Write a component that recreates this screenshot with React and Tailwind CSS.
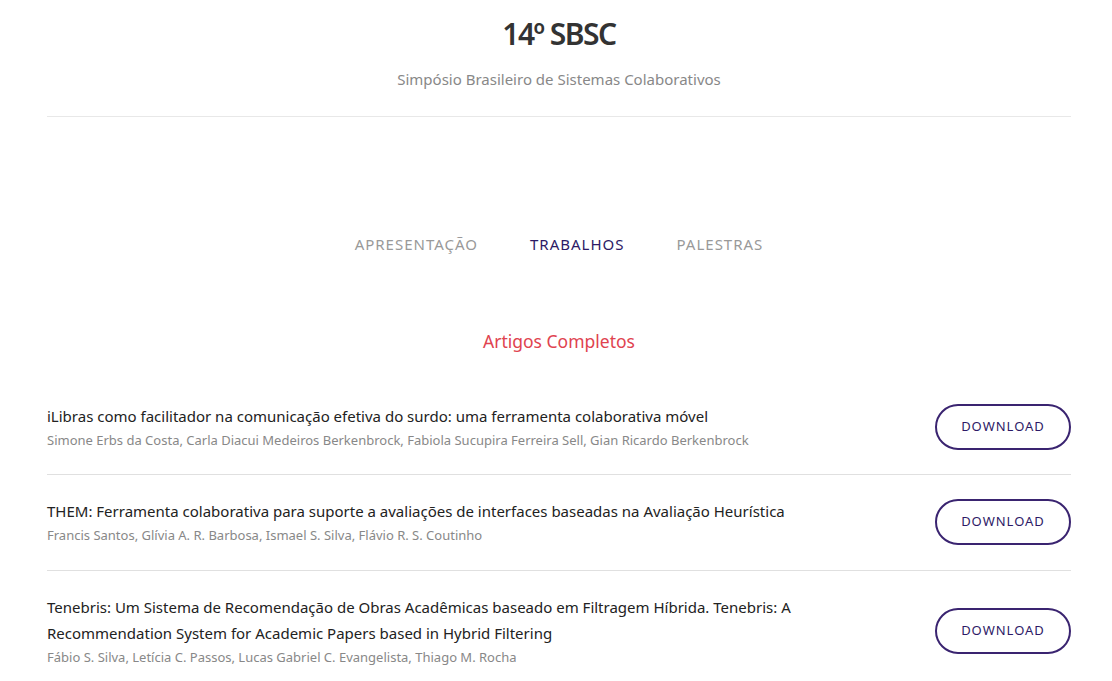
const papers = [
  {
    title:
      'iLibras como facilitador na comunicação efetiva do surdo: uma ferramenta colaborativa móvel',
    authors:
      'Simone Erbs da Costa, Carla Diacui Medeiros Berkenbrock, Fabiola Sucupira Ferreira Sell, Gian Ricardo Berkenbrock',
  },
  {
    title:
      'THEM: Ferramenta colaborativa para suporte a avaliações de interfaces baseadas na Avaliação Heurística',
    authors: 'Francis Santos, Glívia A. R. Barbosa, Ismael S. Silva, Flávio R. S. Coutinho',
  },
  {
    title:
      'Tenebris: Um Sistema de Recomendação de Obras Acadêmicas baseado em Filtragem Híbrida. Tenebris: A Recommendation System for Academic Papers based in Hybrid Filtering',
    authors: 'Fábio S. Silva, Letícia C. Passos, Lucas Gabriel C. Evangelista, Thiago M. Rocha',
  },
];

const tabs = ['APRESENTAÇÃO', 'TRABALHOS', 'PALESTRAS'];

export default function App() {
  return (
    <div className="min-h-screen bg-white font-['Noto_Sans',sans-serif]">
      <div className="ml-[47px] mr-[41px]">
        {/* Header */}
        <header className="flex flex-col items-center pt-[14px] pb-[25px] border-b border-[#e8e8e8]">
          <h1 className="text-[30px] leading-[40px] font-semibold tracking-[-1.5px] text-[#333]">
            14º SBSC
          </h1>
          <p className="mt-[13px] text-[15px] leading-[24px] text-[#888]">
            Simpósio Brasileiro de Sistemas Colaborativos
          </p>
        </header>

        {/* Tabs */}
        <nav className="flex justify-center gap-[52px] pt-[115px]">
          {tabs.map(tab => (
            <span
              key={tab}
              className={
                tab === 'TRABALHOS'
                  ? 'text-[15px] leading-[24px] tracking-[1px] text-[#2d1a66]'
                  : 'text-[15px] leading-[24px] tracking-[1px] text-[#999]'
              }
            >
              {tab}
            </span>
          ))}
        </nav>

        <h2 className="mt-[71px] text-center text-[17.5px] leading-[28px] text-[#e0434f]">
          Artigos Completos
        </h2>

        {/* Papers */}
        <ul className="mt-[48px]">
          {papers.map((p, i) => (
            <li
              key={i}
              className={
                'flex items-center gap-8 ' +
                (i === 0 ? 'pb-[23px] border-b border-[#e0e0e0]' : 'pt-[23px] pb-[24px]') +
                (i === 1 ? ' border-b border-[#e0e0e0]' : '')
              }
            >
              <div className="flex-1 min-w-0">
                <p className="text-[15px] leading-[26px] text-[#222] max-w-[760px]">{p.title}</p>
                <p className="text-[13px] leading-[22px] text-[#888]">{p.authors}</p>
              </div>
              <button className="w-[136px] h-[46px] shrink-0 rounded-full border-2 border-[#3a2470] text-[13px] tracking-[1px] text-[#2d1a66]">
                DOWNLOAD
              </button>
            </li>
          ))}
        </ul>
      </div>
    </div>
  );
}
